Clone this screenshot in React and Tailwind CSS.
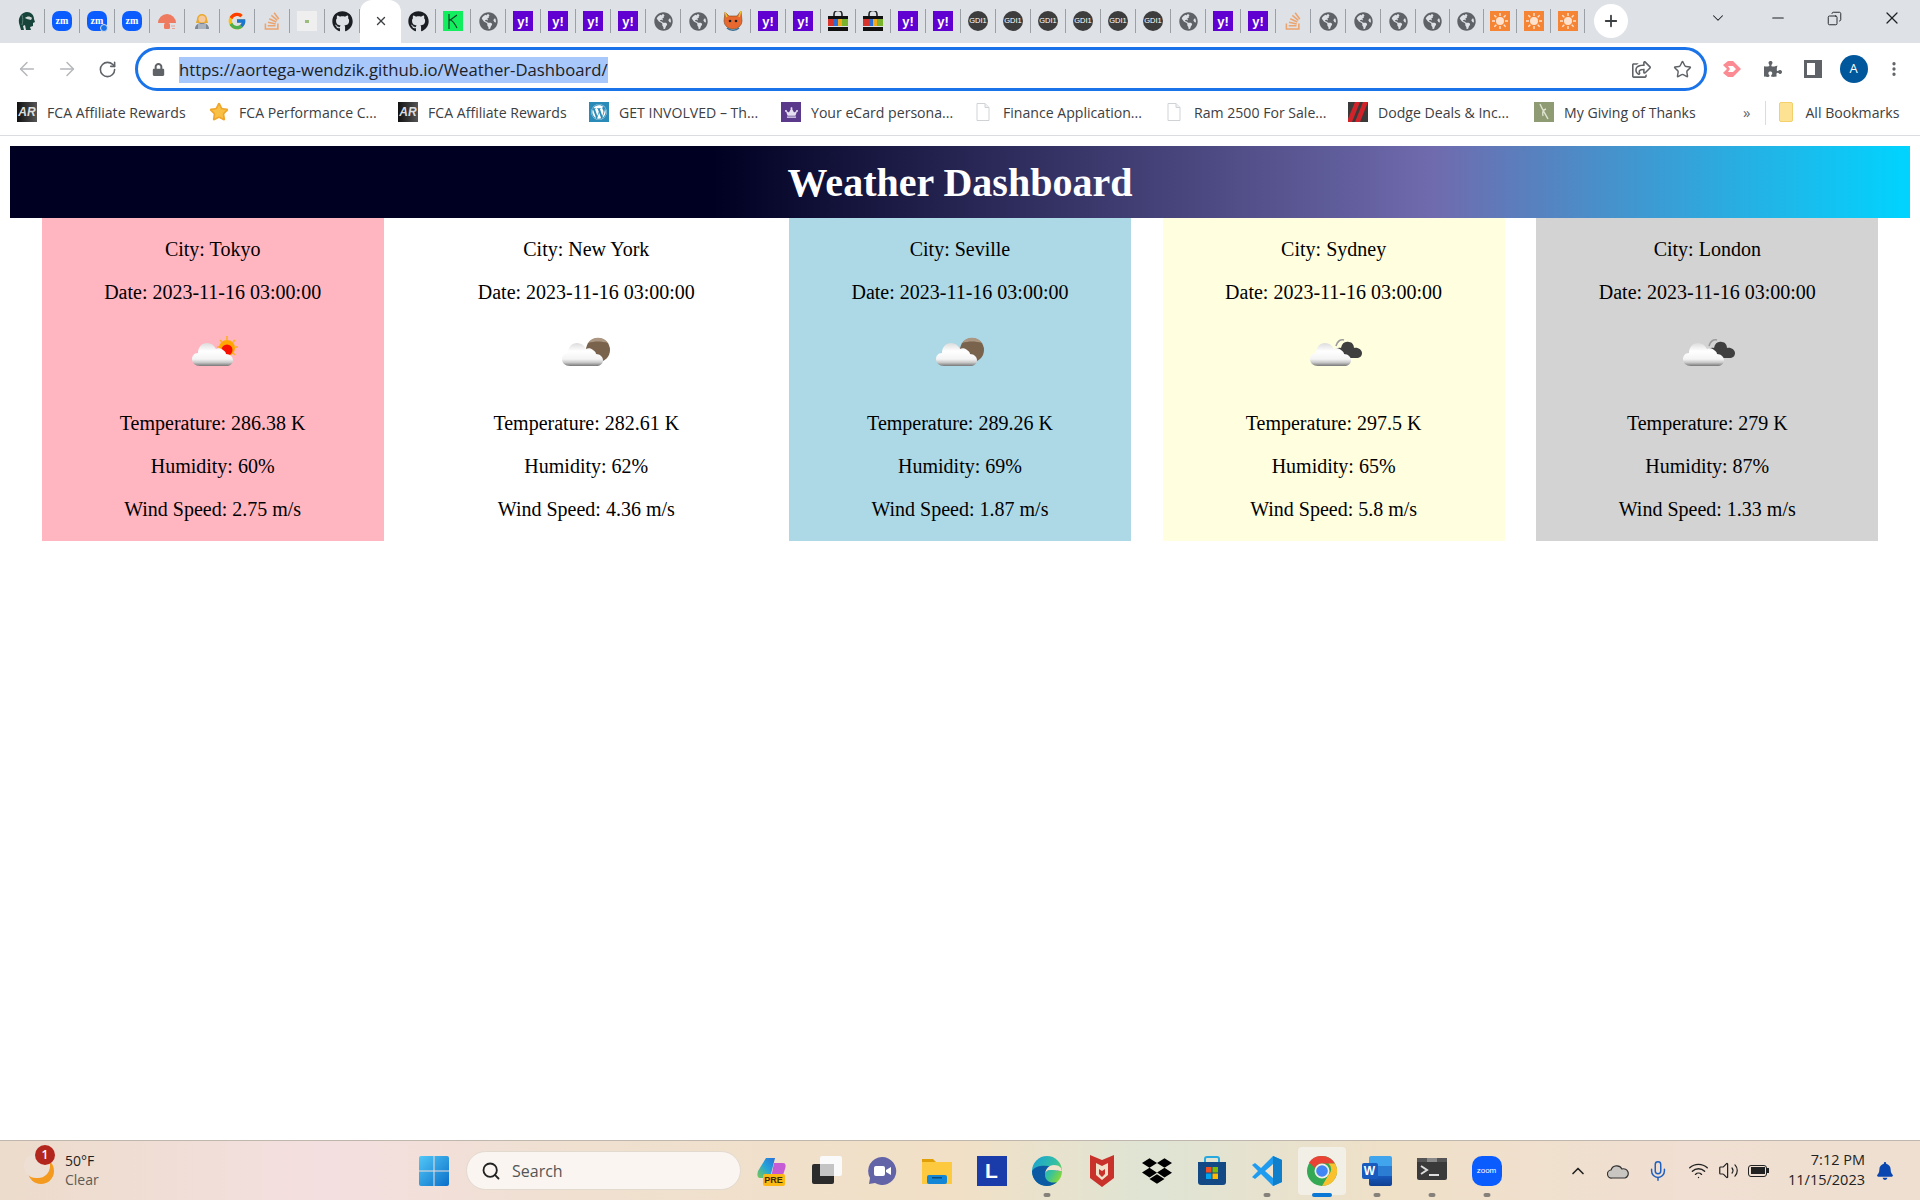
import { useId } from 'react';
import { ArrowLeft, ArrowRight, RotateCw, Star, MoreVertical, ChevronDown, ChevronUp, Minus, X, Plus, Search, Mic, Wifi, Volume2, Copy } from 'lucide-react';
import { FaGithub, FaGlobeAmericas, FaStackOverflow, FaWordpress, FaDropbox, FaLock, FaPuzzlePiece, FaBell, FaCrown, FaRegShareSquare } from 'react-icons/fa';
import { FcGoogle } from 'react-icons/fc';

const UI = "font-['Open_Sans',sans-serif]";

// ---------- tab favicons ----------
const Zm = ({ dot }) => (
    <div className="relative w-[20px] h-[20px] rounded-[7px] bg-[#0b5cff] flex items-center justify-center text-white text-[10px] leading-none font-semibold">
        zm
        {dot && <span className="absolute -right-[1px] -bottom-[1px] w-[8px] h-[8px] rounded-full bg-[#1a73e8] border border-[#dee1e6]" />}
    </div>
);
const Globe = () => <FaGlobeAmericas size={19} className="text-[#5f6368]" />;
const Yahoo = () => (
    <div className="w-[20px] h-[20px] bg-[#6001d2] flex items-center justify-center text-white text-[13px] leading-none font-bold font-['Liberation_Sans',sans-serif]">y!</div>
);
const Gdi = () => (
    <div className="w-[20px] h-[20px] rounded-full bg-[#3d3d3d] flex items-center justify-center text-white text-[7.5px] leading-none font-['Liberation_Sans',sans-serif]">GDI1</div>
);
const Bag = () => (
    <svg width="20" height="20" viewBox="0 0 20 20">
        <path d="M6 6V3.5a4 4 0 0 1 8 0V6" fill="none" stroke="#222" strokeWidth="1.6" />
        <rect y="5" width="20" height="3" fill="#111" />
        <rect y="8" width="6" height="7" fill="#d9342b" />
        <rect x="6" y="8" width="4" height="7" fill="#2a6fd6" />
        <rect x="10" y="8" width="4" height="7" fill="#f4a81c" />
        <rect x="14" y="8" width="6" height="7" fill="#7ab32e" />
        <rect y="16" width="20" height="4" fill="#111" />
    </svg>
);
const SunTile = () => (
    <svg width="20" height="20" viewBox="0 0 20 20">
        <rect width="20" height="20" fill="#f58535" />
        <circle cx="10" cy="10" r="4" fill="#fde3cf" />
        <path d="M10 2v3M10 15v3M2 10h3M15 10h3M4.3 4.3l2 2M13.7 13.7l2 2M4.3 15.7l2-2M13.7 6.3l2-2" stroke="#fde3cf" strokeWidth="1.4" />
    </svg>
);
const Spartan = () => (
    <svg width="20" height="20" viewBox="0 0 20 20">
        <path d="M2 12C1 6 5 1 10 1c4 0 7 3 7 7l1 3-2 1v3l-3 1 1 3H9l-1-5-2 1 1 4H4z" fill="#18453b" />
        <path d="M8 7c2-2 5-2 7 0l-1 2-4-1z" fill="#cfd8d4" />
        <path d="M5 4c1 3 1 6 0 10" fill="none" stroke="#5c7f75" strokeWidth="1" />
    </svg>
);
const Mushroom = () => (
    <svg width="20" height="20" viewBox="0 0 20 20">
        <path d="M1 12a9 9 0 0 1 18 0z" fill="#ee7b5f" />
        <rect x="7" y="12" width="6" height="6" rx="1.5" fill="#ee7b5f" />
        <path d="M14 15h4M15 17.5h3" stroke="#e9a392" strokeWidth="1" />
    </svg>
);
const Coder = () => (
    <svg width="20" height="20" viewBox="0 0 20 20">
        <path d="M5 8a5 5 0 0 1 10 0l1 4H4z" fill="#e9a92c" />
        <circle cx="10" cy="8" r="3.5" fill="#f6c9a0" />
        <path d="M3 18c0-4 3-6 7-6s7 2 7 6z" fill="#7d8796" />
        <rect x="6" y="13" width="8" height="5" fill="#aab2bd" />
    </svg>
);
const Thumb = () => (
    <div className="w-[20px] h-[20px] bg-[#efefef] flex items-center justify-center">
        <span className="w-[4px] h-[3px] bg-[#9dbb7a]" />
    </div>
);
const GreenK = () => (
    <svg width="20" height="20" viewBox="0 0 20 20">
        <rect width="20" height="20" fill="#12ee5d" />
        <path d="M6 3v15M6 10l8-6M6 8c3 1 6 5 8 9" fill="none" stroke="#14432a" strokeWidth="1.2" />
    </svg>
);
const Fox = () => (
    <svg width="22" height="22" viewBox="0 0 22 22">
        <path d="M3 2l4 4h8l4-5 1 10a9 8 0 0 1-18 0z" fill="#e8692f" stroke="#7a4a22" strokeWidth="0.6" />
        <path d="M3 2l2 5M19 1l-2 6" stroke="#f1c232" strokeWidth="1.4" />
        <circle cx="8" cy="11" r="1.3" fill="#222" />
        <circle cx="14" cy="11" r="1.3" fill="#222" />
        <path d="M5 18c3 3 9 3 12 0" fill="none" stroke="#3b6f92" strokeWidth="1.6" />
    </svg>
);
const SoTab = () => <FaStackOverflow size={20} className="text-[#eca46e]" />;
const Hub = () => <FaGithub size={21} className="text-[#1b1f23]" />;

const tabsLeft = [<Spartan />, <Zm />, <Zm dot />, <Zm />, <Mushroom />, <Coder />, <FcGoogle size={20} />, <SoTab />, <Thumb />, <Hub />];
const tabsRight = [
    <Hub />, <GreenK />, <Globe />, <Yahoo />, <Yahoo />, <Yahoo />, <Yahoo />, <Globe />, <Globe />, <Fox />,
    <Yahoo />, <Yahoo />, <Bag />, <Bag />, <Yahoo />, <Yahoo />, <Gdi />, <Gdi />, <Gdi />, <Gdi />, <Gdi />, <Gdi />,
    <Globe />, <Yahoo />, <Yahoo />, <SoTab />, <Globe />, <Globe />, <Globe />,
];
const tabsNarrow = [<Globe />, <Globe />, <SunTile />, <SunTile />, <SunTile />];

const Tab = ({ narrow, children }) => (
    <div className={`${narrow ? 'w-[33.8px]' : 'w-[35px]'} h-[24px] shrink-0 flex items-center justify-center border-r border-[#9aa0a6]`}>{children}</div>
);

const TabStrip = () => (
    <div className="h-[43px] bg-[#dee1e6] flex items-start pl-[10px]">
        <div className="flex items-center h-[24px] mt-[9px]">
            {tabsLeft.map((icon, i) => <Tab key={i}>{icon}</Tab>)}
        </div>
        <div className="w-[41px] h-[43px] shrink-0 bg-white rounded-t-[12px] flex items-center justify-center pb-[1px]">
            <X size={14} strokeWidth={2.4} className="text-[#3c4043]" />
        </div>
        <div className="flex items-center h-[24px] mt-[9px]">
            {tabsRight.map((icon, i) => <Tab key={i}>{icon}</Tab>)}
            {tabsNarrow.map((icon, i) => <Tab key={i} narrow>{icon}</Tab>)}
        </div>
        <div className="ml-[9px] mt-[4px] w-[34px] h-[34px] shrink-0 rounded-full bg-white flex items-center justify-center">
            <Plus size={18} strokeWidth={2.4} className="text-[#3c4043]" />
        </div>
        <div className="ml-auto mt-[8px] flex items-center text-[#202124]">
            <ChevronDown size={18} strokeWidth={1.4} />
            <div className="w-[57px] ml-[22px] flex justify-center"><Minus size={18} strokeWidth={1.5} /></div>
            <div className="w-[57px] flex justify-center"><Copy size={15} strokeWidth={1.5} className="-scale-x-100" /></div>
            <div className="w-[57px] flex justify-center"><X size={20} strokeWidth={1.5} /></div>
        </div>
    </div>
);

const ToolbarIcon = ({ children }) => (
    <div className="w-[30px] h-[30px] shrink-0 flex items-center justify-center">{children}</div>
);

const PinkArrow = () => (
    <svg width="22" height="22" viewBox="0 0 22 22">
        <path d="M2 7l5-4h5l8 8-8 8H7l-5-4 4-4z" fill="#fb8a92" />
        <path d="M7 8h5l3 3-3 3H7l2-3z" fill="#fff" />
    </svg>
);

const Toolbar = () => (
    <div className="h-[50px] bg-white flex items-center pl-[12px] pt-[2px]">
        <div className="flex items-center gap-[10px]">
            <ToolbarIcon><ArrowLeft size={22} strokeWidth={1.6} className="text-[#b4b7bb]" /></ToolbarIcon>
            <ToolbarIcon><ArrowRight size={22} strokeWidth={1.6} className="text-[#b4b7bb]" /></ToolbarIcon>
            <ToolbarIcon><RotateCw size={19} strokeWidth={2} className="text-[#5f6368]" /></ToolbarIcon>
        </div>
        <div className="ml-[13px] w-[1572px] h-[44px] shrink-0 rounded-full border-[3px] border-[#1a73e8] flex items-center pl-[14px] pr-[7px]">
            <FaLock size={13} className="text-[#5f6368]" />
            <span className={`ml-[14px] mt-[1px] bg-[#a8c7fa] text-[#202124] text-[16.7px] leading-[26px] whitespace-nowrap ${UI}`}>
                https://aortega-wendzik.github.io/Weather-Dashboard/
            </span>
            <div className="ml-auto flex items-center gap-[11px]">
                <ToolbarIcon><FaRegShareSquare size={19} className="text-[#5f6368]" /></ToolbarIcon>
                <ToolbarIcon><Star size={19} strokeWidth={1.8} className="text-[#5f6368]" /></ToolbarIcon>
            </div>
        </div>
        <div className="ml-[10px] flex items-center gap-[10.5px]">
            <ToolbarIcon><PinkArrow /></ToolbarIcon>
            <ToolbarIcon><FaPuzzlePiece size={18} className="text-[#5f6368]" /></ToolbarIcon>
            <ToolbarIcon><div className="w-[18px] h-[18px] border-[3px] border-r-[7px] border-[#5f6368]" /></ToolbarIcon>
            <ToolbarIcon>
                <div className={`w-[28px] h-[28px] rounded-full bg-[#01579b] text-white text-[13px] flex items-center justify-center ${UI}`}>A</div>
            </ToolbarIcon>
            <ToolbarIcon><MoreVertical size={18} strokeWidth={2.4} className="text-[#5f6368]" /></ToolbarIcon>
        </div>
    </div>
);

// ---------- bookmark icons ----------
const ArIcon = () => (
    <div className="w-[20px] h-[20px] bg-[linear-gradient(90deg,#111,#555)] text-[#ddd] italic font-bold text-[12px] leading-[20px] text-center font-['Liberation_Sans',sans-serif]">AR</div>
);
const Doc = () => (
    <svg width="20" height="20" viewBox="0 0 20 20">
        <path d="M4 1.5h8l4 4v13H4z" fill="#fff" stroke="#d0d3d6" />
        <path d="M12 1.5v4h4" fill="#eef0f2" stroke="#d0d3d6" />
    </svg>
);
const WpIcon = () => (
    <div className="w-[20px] h-[20px] bg-[#2a8bb8] flex items-center justify-center"><FaWordpress size={16} className="text-white" /></div>
);
const CrownIcon = () => (
    <div className="w-[20px] h-[20px] bg-[#5b3a8c] flex items-center justify-center"><FaCrown size={13} className="text-[#e6dff0]" /></div>
);
const DodgeIcon = () => (
    <svg width="20" height="20" viewBox="0 0 20 20">
        <rect width="20" height="20" fill="#3a3a3a" />
        <path d="M7 0h5L4 20H0V17zM15 0h5L12 20H7z" fill="#d2232a" />
    </svg>
);
const ThanksIcon = () => (
    <svg width="20" height="20" viewBox="0 0 20 20">
        <rect width="20" height="20" fill="#8f9b72" />
        <path d="M6 2c2 5 3 6 8 15M12 7c-3 1-4 3-3 7" fill="none" stroke="#dfe3cf" strokeWidth="1.4" />
    </svg>
);

const bookmarks = [
    { icon: <ArIcon />, label: 'FCA Affiliate Rewards', width: 'w-[192px]' },
    { icon: <Star size={20} fill="#f8c146" stroke="#f0a52c" />, label: 'FCA Performance C...', width: 'w-[189px]' },
    { icon: <ArIcon />, label: 'FCA Affiliate Rewards', width: 'w-[191px]' },
    { icon: <WpIcon />, label: 'GET INVOLVED – Th...', width: 'w-[192px]' },
    { icon: <CrownIcon />, label: 'Your eCard persona...', width: 'w-[192px]' },
    { icon: <Doc />, label: 'Finance Application...', width: 'w-[191px]' },
    { icon: <Doc />, label: 'Ram 2500 For Sale...', width: 'w-[184px]' },
    { icon: <DodgeIcon />, label: 'Dodge Deals & Inc...', width: 'w-[186px]' },
    { icon: <ThanksIcon />, label: 'My Giving of Thanks', width: 'w-[175px]' },
];

const Bookmarks = () => (
    <div className={`h-[43px] bg-white border-b border-[#dadce0] flex items-center pl-[17px] pb-[3px] text-[14.1px] text-[#3c4043] ${UI}`}>
        {bookmarks.map((b, i) => (
            <div key={i} className={`${b.width} shrink-0 flex items-center gap-[10px] whitespace-nowrap`}>
                <span className="w-[20px] h-[20px] shrink-0 flex items-center justify-center">{b.icon}</span>
                {b.label}
            </div>
        ))}
        <span className="ml-[34px] text-[15px] leading-none text-[#5f6368]">»</span>
        <span className="ml-[15px] w-px h-[24px] bg-[#dadce0]" />
        <div className="ml-[10px] flex items-center gap-[12px] whitespace-nowrap">
            <span className="w-[14px] h-[20px] ml-[3px] rounded-[2px] bg-[#fde293] border border-[#f3d069]" />
            All Bookmarks
        </div>
    </div>
);

// ---------- weather icons ----------
const CloudShape = ({ id, x = 0 }) => (
    <g transform={`translate(${x} 0)`}>
        <path d="M9 42c-5 0-8-3-8-7 0-3 2-6 6-6 0-6 4-10 9-10 4 0 7 2 9 6 2-1 5-1 7 1 2 1 3 3 3 4 4 0 7 3 7 6 0 4-3 6-7 6z" fill={`url(#${id})`} />
    </g>
);

const CloudGradient = ({ id }) => (
    <defs>
        <linearGradient id={id} x1="0" y1="0" x2="0" y2="1">
            <stop offset="0" stopColor="#dcdcdc" />
            <stop offset="0.35" stopColor="#ffffff" />
            <stop offset="0.7" stopColor="#f4f4f4" />
            <stop offset="0.85" stopColor="#c8c8c8" />
            <stop offset="1" stopColor="#777777" />
        </linearGradient>
    </defs>
);

const WeatherIcon = ({ type }) => {
    const id = useId();
    return (
        <svg width="50" height="50" viewBox="0 0 50 50" className="overflow-visible">
            <CloudGradient id={id} />
            {type === 'sun' && (
                <>
                    <path d="M39 12v4M39 32v3M29 23h3M47 23h3M32 16l2 2M45 29l2 2M32 30l2-2M45 18l2-2" stroke="#ffb01f" strokeWidth="1.6" />
                    <circle cx="39" cy="24" r="8" fill="#ffa700" />
                    <circle cx="39" cy="26" r="5.5" fill="#f70f00" />
                    <CloudShape id={id} x={3} />
                </>
            )}
            {type === 'moon' && (
                <>
                    <circle cx="37" cy="26" r="12" fill="#7a634d" />
                    <path d="M27 19a12 12 0 0 1 20 0c-6-2-14-2-20 0z" fill="#ab9682" />
                    <CloudShape id={id} />
                </>
            )}
            {type === 'dark' && (
                <>
                    <path d="M27 22c1-5 5-7 8-6" fill="none" stroke="#9a9a9a" strokeWidth="1.6" />
                    <path d="M31 34c-4 0-6-3-5-6 0-3 3-5 6-4 1-5 4-7 8-6 3 0 5 3 5 6 4-1 8 2 8 5 0 3-2 5-6 5z" fill="#3f3f3f" />
                    <CloudShape id={id} />
                </>
            )}
        </svg>
    );
};

const cards = [
    { city: 'Tokyo', temp: '286.38', hum: 60, wind: '2.75', icon: 'sun', bg: 'bg-[#ffb6c1]' },
    { city: 'New York', temp: '282.61', hum: 62, wind: '4.36', icon: 'moon', bg: 'bg-white' },
    { city: 'Seville', temp: '289.26', hum: 69, wind: '1.87', icon: 'moon', bg: 'bg-[#add8e6]' },
    { city: 'Sydney', temp: '297.5', hum: 65, wind: '5.8', icon: 'dark', bg: 'bg-[#ffffe0]' },
    { city: 'London', temp: '279', hum: 87, wind: '1.33', icon: 'dark', bg: 'bg-[#d3d3d3]' },
];

const WeatherCard = ({ city, temp, hum, wind, icon, bg }) => (
    <div className={`w-[342px] ${bg} text-center text-[20px] leading-[23px] text-black py-[20px] flex flex-col`}>
        <p>City: {city}</p>
        <p className="mt-[20px]">Date: 2023-11-16 03:00:00</p>
        <div className="mt-[20px] h-[67.5px] flex justify-center items-start"><WeatherIcon type={icon} /></div>
        <p className="mt-[20px]">Temperature: {temp} K</p>
        <p className="mt-[20px]">Humidity: {hum}%</p>
        <p className="mt-[20px]">Wind Speed: {wind} m/s</p>
    </div>
);

// ---------- taskbar ----------
const WinLogo = () => (
    <svg width="30" height="30" viewBox="0 0 30 30">
        <defs>
            <linearGradient id="win" x1="0" y1="0" x2="1" y2="1">
                <stop offset="0" stopColor="#52c8f8" />
                <stop offset="1" stopColor="#0a6fc8" />
            </linearGradient>
        </defs>
        <path d="M0 2a2 2 0 0 1 2-2h12.5v14.5H0zM15.5 0H28a2 2 0 0 1 2 2v12.5H15.5zM0 15.5h14.5V30H2a2 2 0 0 1-2-2zM15.5 15.5H30V28a2 2 0 0 1-2 2H15.5z" fill="url(#win)" />
    </svg>
);
const Copilot = () => (
    <div className="relative w-[30px] h-[30px]">
        <svg width="30" height="30" viewBox="0 0 30 30">
            <defs>
                <linearGradient id="cop" x1="0" y1="1" x2="1" y2="0">
                    <stop offset="0" stopColor="#7bc950" />
                    <stop offset="0.5" stopColor="#25a5d8" />
                    <stop offset="1" stopColor="#2a6fdb" />
                </linearGradient>
            </defs>
            <path d="M9 2h9l-5 20H3C0 22 0 18 1 15z" fill="url(#cop)" />
            <path d="M17 7h9c3 0 3 3 2 6l-3 9h-11z" fill="#c65bd6" />
        </svg>
        <span className="absolute left-[6px] top-[18px] w-[22px] h-[12px] rounded-[2px] bg-[#fdb913] text-[9px] leading-[12px] text-center font-bold text-[#3a2a00] font-['Liberation_Sans',sans-serif]">PRE</span>
    </div>
);
const TaskView = () => (
    <div className="relative w-[30px] h-[30px]">
        <span className="absolute left-[8px] top-0 w-[22px] h-[20px] rounded-[2px] bg-[#fafafa]" />
        <span className="absolute left-0 top-[8px] w-[22px] h-[20px] rounded-[2px] bg-[#2b2b2b]" />
        <span className="absolute left-[8px] top-[8px] w-[14px] h-[12px] bg-[#c4c4c4]" />
    </div>
);
const Chat = () => (
    <svg width="30" height="30" viewBox="0 0 30 30">
        <path d="M15 1a14 14 0 1 1-7 26l-6 1 1-6A14 14 0 0 1 15 1z" fill="#6264a7" />
        <rect x="7" y="10" width="11" height="10" rx="2" fill="#fff" />
        <path d="M19 14l5-3v8l-5-3z" fill="#fff" />
    </svg>
);
const Folder = () => (
    <svg width="30" height="30" viewBox="0 0 30 30">
        <path d="M0 3h11l3 3h16v4H0z" fill="#e2a008" />
        <path d="M0 6h30v22H0z" fill="#fdc93f" />
        <rect x="5" y="19" width="20" height="9" rx="2" fill="#1387d6" />
        <rect x="10" y="21" width="10" height="1.5" fill="#0b4d80" />
    </svg>
);
const LTile = () => (
    <div className="w-[30px] h-[30px] bg-[#1a3caa] flex items-center justify-center text-white text-[21px] font-bold leading-none font-['Liberation_Sans',sans-serif]">L</div>
);
const Edge = () => (
    <svg width="30" height="30" viewBox="0 0 30 30">
        <defs>
            <linearGradient id="edg" x1="0" y1="0" x2="1" y2="0.6">
                <stop offset="0" stopColor="#18a0d8" />
                <stop offset="0.7" stopColor="#35c1a0" />
                <stop offset="1" stopColor="#7fd63f" />
            </linearGradient>
        </defs>
        <circle cx="15" cy="15" r="15" fill="url(#edg)" />
        <path d="M0 15c0 9 7 15 15 15 4 0 8-2 10-4-6 2-12-1-12-7 0-3 2-5 6-5 4 0 6 1 11 1 0-2-3-5-8-5C12 10 5 8 0 15z" fill="#0c59a4" />
        <path d="M13 19c0-3 2-5 6-5 4 0 6 1 11 1 0-3-3-6-8-6-5 0-9 4-9 10z" fill="#f0e3cc" />
    </svg>
);
const Mcafee = () => (
    <svg width="30" height="32" viewBox="0 0 30 32">
        <path d="M3 0l12 5 12-5v23L15 32 3 23z" fill="#c8322b" />
        <path d="M9 8l6 3 6-3v12l-6 5-6-5z" fill="#f1e1cb" />
        <path d="M12 14l3 2 3-2v5l-3 3-3-3z" fill="#c8322b" />
    </svg>
);
const Store = () => (
    <svg width="30" height="30" viewBox="0 0 30 30">
        <path d="M8 6V3a2 2 0 0 1 2-2h10a2 2 0 0 1 2 2v3" fill="none" stroke="#27a9e0" strokeWidth="2" />
        <path d="M1 6h28v20a3 3 0 0 1-3 3H4a3 3 0 0 1-3-3z" fill="#134a86" />
        <rect x="9" y="11" width="5.5" height="5.5" fill="#f25022" />
        <rect x="15.5" y="11" width="5.5" height="5.5" fill="#7fba00" />
        <rect x="9" y="17.5" width="5.5" height="5.5" fill="#00a4ef" />
        <rect x="15.5" y="17.5" width="5.5" height="5.5" fill="#ffb900" />
    </svg>
);
const VsCode = () => (
    <svg width="30" height="30" viewBox="0 0 30 30">
        <path d="M21 0l9 4v22l-9 4L9 18l-6 5-3-2 6-6-6-6 3-2 6 5z" fill="#1f9cf0" />
        <path d="M21 8l-8 7 8 7z" fill="#f0e2cc" />
        <path d="M21 0l9 4v22l-9 4z" fill="#0f7fcc" />
    </svg>
);
const Chrome = () => (
    <svg width="30" height="30" viewBox="0 0 30 30">
        <circle cx="15" cy="15" r="15" fill="#34a853" />
        <path d="M15 0a15 15 0 0 1 13 7.5H15a7.5 7.5 0 0 0-7 4.5L2 6.5A15 15 0 0 1 15 0z" fill="#ea4335" />
        <path d="M28 7.5A15 15 0 0 1 15 30l6.5-11a7.5 7.5 0 0 0 0-11.5z" fill="#fbc02d" />
        <circle cx="15" cy="15" r="7.5" fill="#f2efe6" />
        <circle cx="15" cy="15" r="5.8" fill="#4285f4" />
    </svg>
);
const Word = () => (
    <div className="relative w-[30px] h-[30px]">
        <div className="absolute left-[7px] top-0 w-[23px] h-[30px] rounded-[2px] bg-[linear-gradient(180deg,#41a5ee_0%,#41a5ee_33%,#2b7cd3_33%,#2b7cd3_66%,#185abd_66%,#103f91_100%)]" />
        <div className="absolute left-0 top-[7px] w-[16px] h-[16px] rounded-[2px] bg-[#185abd] text-white text-[12px] font-bold leading-[16px] text-center font-['Liberation_Sans',sans-serif]">W</div>
    </div>
);
const Terminal = () => (
    <svg width="30" height="30" viewBox="0 0 30 30">
        <rect y="2" width="30" height="22" rx="2" fill="#3a3a3a" />
        <rect y="2" width="30" height="4" fill="#555" />
        <rect x="10" y="2" width="10" height="4" fill="#8a8a8a" />
        <path d="M4 10l6 4-6 4" fill="none" stroke="#ddd" strokeWidth="2" />
        <rect x="12" y="18" width="10" height="2" fill="#ddd" />
    </svg>
);
const ZoomApp = () => (
    <div className="w-[30px] h-[30px] rounded-[10px] bg-[#0b5cff] flex items-center justify-center text-white text-[8px] leading-none font-['Liberation_Sans',sans-serif]">zoom</div>
);

const Dot = () => <span className="absolute bottom-[4px] left-1/2 -translate-x-1/2 w-[7px] h-[4px] rounded-full bg-[#85807a]" />;

const apps = [
    { icon: <Copilot /> },
    { icon: <TaskView /> },
    { icon: <Chat /> },
    { icon: <Folder /> },
    { icon: <LTile /> },
    { icon: <Edge />, dot: true },
    { icon: <Mcafee /> },
    { icon: <FaDropbox size={30} className="text-black" /> },
    { icon: <Store /> },
    { icon: <VsCode />, dot: true },
    { icon: <Chrome />, active: true },
    { icon: <Word />, dot: true },
    { icon: <Terminal />, dot: true },
    { icon: <ZoomApp />, dot: true },
];

const AppCell = ({ icon, dot, active }) => (
    <div className="relative w-[55px] h-[60px] shrink-0 flex items-center justify-center">
        {active && <span className="absolute left-[3.5px] top-[6px] w-[48px] h-[48px] rounded-[4px] bg-[#f2efe6]" />}
        <span className="relative">{icon}</span>
        {dot && <Dot />}
        {active && <span className="absolute bottom-[4px] left-1/2 -translate-x-1/2 w-[20px] h-[4px] rounded-full bg-[#0a78d4]" />}
    </div>
);

const Taskbar = () => (
    <div className={`h-[60px] shrink-0 border-t border-[#bfb7ad] flex items-center text-[#1f1f1f] bg-[linear-gradient(90deg,#ecdccb_0%,#f4dfe0_17%,#efe0d0_30%,#f1e0c6_50%,#dfe4d4_60%,#efe0c8_72%,#f0dfd2_88%,#eedfd0_100%)] ${UI}`}>
        <div className="w-[419px] shrink-0 flex items-center pl-[26px]">
            <div className="relative w-[30px] h-[30px]">
                <span className="absolute left-[2px] top-[2px] w-[26px] h-[26px] rounded-full bg-[#f39a1f]" />
                <span className="absolute left-[-2px] top-[-2px] w-[26px] h-[24px] rounded-full bg-[#eedfd4]" />
                <span className="absolute left-[9px] top-[-11px] w-[20px] h-[20px] rounded-full bg-[#b3261e] text-white text-[12px] font-semibold leading-[20px] text-center">1</span>
            </div>
            <div className="ml-[9px] -mt-[1px] text-[14px] leading-[19px]">
                <div>50°F</div>
                <div className="text-[#5e5a55]">Clear</div>
            </div>
        </div>
        <WinLogo />
        <div className="ml-[17px] w-[275px] h-[39px] shrink-0 rounded-full bg-[#faf5f0] border border-[#e2d9cf] flex items-center pl-[14px] text-[16px] text-[#555]">
            <Search size={20} strokeWidth={2.2} className="text-[#222]" />
            <span className="ml-[11px]">Search</span>
        </div>
        <div className="ml-[3px] flex">
            {apps.map((a, i) => <AppCell key={i} {...a} />)}
        </div>
        <div className="ml-[54px] flex items-center">
            <ChevronUp size={20} strokeWidth={2} className="text-[#222]" />
            <svg width="22" height="16" viewBox="0 0 22 16" className="ml-[19px]">
                <path d="M5 15a4 4 0 0 1-1-8 6 6 0 0 1 11-1 4.5 4.5 0 0 1 3 9z" fill="#c9c5c0" stroke="#333" strokeWidth="1.2" />
            </svg>
            <Mic size={22} strokeWidth={1.6} className="ml-[18px] text-[#1f5fbf]" />
            <Wifi size={21} strokeWidth={1.6} className="ml-[19px] text-[#222]" />
            <Volume2 size={21} strokeWidth={1.4} className="ml-[9px] text-[#222]" />
            <div className="ml-[9px] w-[19px] h-[12px] rounded-[3px] border-[1.5px] border-[#222] p-[1.5px]">
                <div className="w-full h-full bg-[#222]" />
            </div>
            <span className="w-[2px] h-[5px] bg-[#222]" />
        </div>
        <div className="ml-auto -mt-[1px] text-right text-[14.5px] leading-[20px] text-[#222]">
            <div>7:12 PM</div>
            <div>11/15/2023</div>
        </div>
        <FaBell size={18} className="ml-[11px] mr-[26px] text-[#0a46b0]" />
    </div>
);

export default function App() {
    return (
        <div className="w-[1920px] h-[1200px] flex flex-col overflow-hidden bg-white font-['Liberation_Serif',serif]">
            <TabStrip />
            <Toolbar />
            <Bookmarks />
            <main className="flex-1 px-[10px] pt-[10px]">
                <h1 className="h-[72px] pt-[2px] flex items-center justify-center text-[40px] font-bold text-white bg-[linear-gradient(90deg,#000022_37%,#6f6bae_75%,#00d4ff_100%)]">
                    Weather Dashboard
                </h1>
                <div className="flex justify-evenly">
                    {cards.map((c) => <WeatherCard key={c.city} {...c} />)}
                </div>
            </main>
            <Taskbar />
        </div>
    );
}
